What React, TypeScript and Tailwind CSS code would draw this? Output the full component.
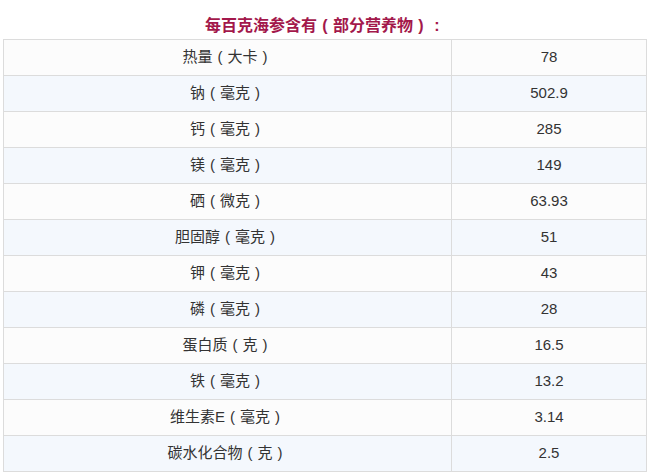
const rows: [string, string][] = [
  ["热量（大卡）", "78"],
  ["钠（毫克）", "502.9"],
  ["钙（毫克）", "285"],
  ["镁（毫克）", "149"],
  ["硒（微克）", "63.93"],
  ["胆固醇（毫克）", "51"],
  ["钾（毫克）", "43"],
  ["磷（毫克）", "28"],
  ["蛋白质（克）", "16.5"],
  ["铁（毫克）", "13.2"],
  ["维生素E（毫克）", "3.14"],
  ["碳水化合物（克）", "2.5"],
];

// full-width brackets drawn as centred half-width glyphs, like the original font
function Label({ text }: { text: string }) {
  return (
    <>
      {text.split(/([（）：])/).map((part, i) => {
        if (part === "（") return <span key={i} className="inline-block w-[1em] text-center">(</span>;
        if (part === "）") return <span key={i} className="inline-block w-[1em] text-center">)</span>;
        if (part === "：") return <span key={i} className="inline-block w-[1em] text-center">:</span>;
        return part;
      })}
    </>
  );
}

export default function App() {
  return (
    <div className="h-[473px] w-[649px] overflow-hidden bg-white pl-[3px] pr-[2px] pt-[15px] font-['Liberation_Sans','Noto_Sans_CJK_SC',sans-serif] text-[#333]">
      <h2 className="h-[24px] text-center text-[16px] font-bold leading-[22px] text-[#a3184b]">
        <Label text="每百克海参含有（部分营养物）：" />
      </h2>
      <table className="w-full border-collapse text-[15px]">
        <tbody>
          {rows.map(([name, value], i) => (
            <tr key={name} className={i % 2 === 0 ? "bg-[#fcfcfc]" : "bg-[#f4f8fd]"}>
              <td className="h-[36px] w-[448px] border border-[#dcdcdc] p-0 text-center">
                <Label text={name} />
              </td>
              <td className="h-[36px] border border-[#dcdcdc] p-0 text-center">{value}</td>
            </tr>
          ))}
        </tbody>
      </table>
    </div>
  );
}
